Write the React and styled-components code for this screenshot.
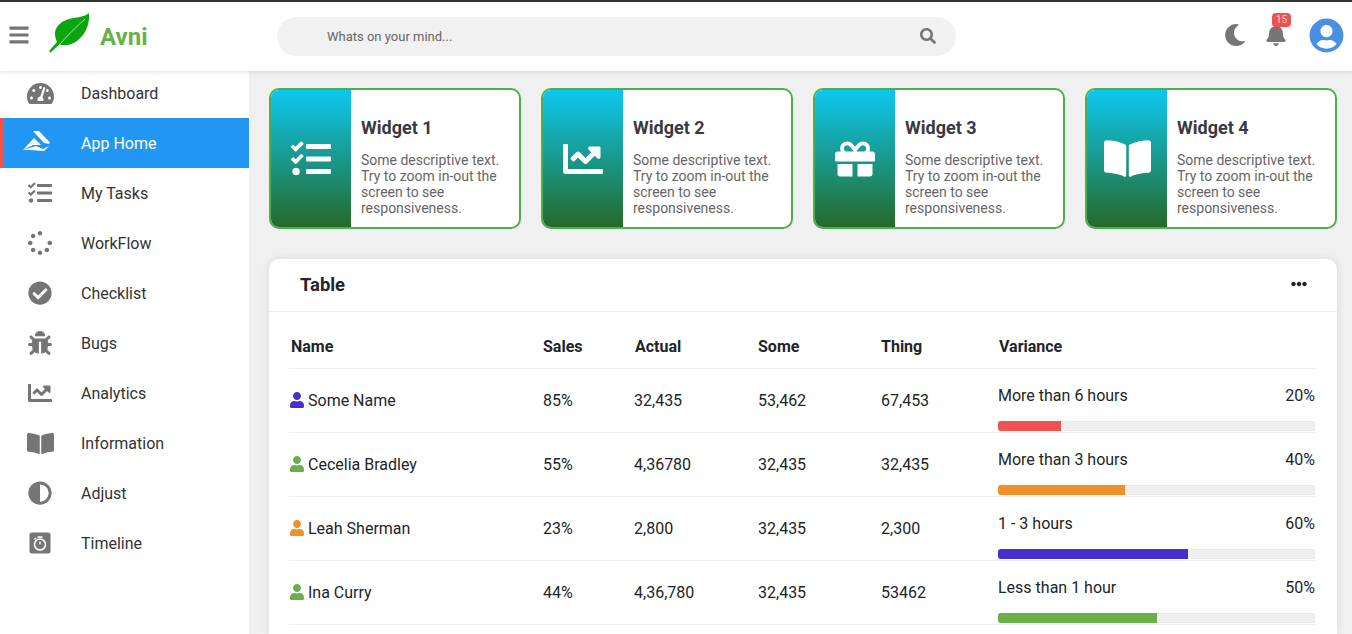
import React from 'react';
import styled, { createGlobalStyle } from 'styled-components';
import {
  FaAdjust,
  FaBars,
  FaBell,
  FaBookOpen,
  FaBug,
  FaChartLine,
  FaCheckCircle,
  FaEllipsisH,
  FaGift,
  FaMoon,
  FaSearch,
  FaSpinner,
  FaTachometerAlt,
  FaTasks,
  FaUser,
  FaUserCircle,
} from 'react-icons/fa';

const GlobalStyle = createGlobalStyle`
  html, body {
    margin: 0;
    height: 100%;
    overflow: hidden;
    background: #f0f0f0;
    font-family: Roboto, 'Liberation Sans', sans-serif;
    color: #212529;
  }
  * { box-sizing: border-box; }
`;

const Page = styled.div`
  display: flex;
  flex-direction: column;
  height: 100vh;
`;

const Header = styled.header`
  position: relative;
  z-index: 2;
  flex: none;
  display: flex;
  align-items: center;
  height: 71px;
  padding: 0 8px;
  background: #fff;
  border-top: 2px solid #333;
  box-shadow: 0 1px 4px rgba(0, 0, 0, 0.12);
`;

const MenuButton = styled.div`
  display: flex;
  width: 22px;
  margin-top: -3px;
  margin-right: 14px;
  color: #757575;
  font-size: 22px;
`;

const Logo = styled.div`
  display: flex;
  align-items: center;
  width: 233px;
  color: #69b04b;
  font-size: 24px;
  font-weight: 700;
`;

const LeafSvg = styled.svg`
  flex: none;
  margin-bottom: 7px;
`;

const LogoName = styled.span`
  margin-top: 1px;
  margin-left: 4px;
`;

const Search = styled.div`
  display: flex;
  align-items: center;
  justify-content: space-between;
  width: 679px;
  height: 39px;
  margin-top: -1px;
  padding: 0 20px 0 50px;
  border-radius: 20px;
  background: #f1f1f1;
  color: #666;
  font-size: 13px;
  svg {
    color: #757575;
    font-size: 16px;
  }
`;

const HeaderTools = styled.div`
  display: flex;
  align-items: center;
  margin-left: auto;
  margin-top: -3px;
  color: #757575;
`;

const MoonWrap = styled.span`
  display: flex;
  font-size: 22px;
`;

const BellWrap = styled.div`
  position: relative;
  display: flex;
  margin: 0 22px 0 19px;
  font-size: 22px;
`;

const Badge = styled.span`
  position: absolute;
  top: -11px;
  left: 7px;
  width: 19px;
  height: 14px;
  border-radius: 4px;
  background: #ef5350;
  color: #fbd5d5;
  font-size: 10px;
  line-height: 14px;
  text-align: center;
`;

const Avatar = styled.div`
  display: flex;
  margin-top: 1px;
  color: #4a90e2;
  font-size: 35px;
`;

const Body = styled.div`
  flex: 1;
  display: flex;
  min-height: 0;
`;

const Sidebar = styled.nav`
  flex: none;
  width: 249px;
  margin-top: -3px;
  background: #fff;
`;

const NavItem = styled.div`
  display: flex;
  align-items: center;
  height: 50px;
  border-left: ${(p) => (p.$active ? '4px solid #ef5350' : 'none')};
  padding-left: ${(p) => (p.$active ? '23px' : '27px')};
  background: ${(p) => (p.$active ? '#2196f3' : 'transparent')};
  color: ${(p) => (p.$active ? '#fff' : '#333')};
  font-size: 16px;
`;

const NavIcon = styled.span`
  display: flex;
  justify-content: center;
  width: 26px;
  margin-right: 28px;
  color: ${(p) => (p.$active ? '#fff' : '#757575')};
  font-size: 24px;
  svg {
    flex: none;
  }
`;

const Main = styled.main`
  flex: 1;
  display: flex;
  flex-direction: column;
  min-width: 0;
  padding: 17px 15px 0 20px;
`;

const Widgets = styled.section`
  display: grid;
  grid-template-columns: repeat(4, 252px);
  gap: 20px;
`;

const Widget = styled.article`
  display: flex;
  height: 141px;
  overflow: hidden;
  border: 2px solid #4caf50;
  border-radius: 10px;
  background: #fff;
`;

const WidgetIcon = styled.div`
  flex: none;
  display: flex;
  align-items: center;
  justify-content: center;
  width: 80px;
  background: linear-gradient(#0dc8f0, #26692a);
  color: #fff;
  font-size: 40px;
  svg {
    flex: none;
  }
`;

const WidgetBody = styled.div`
  padding: 27px 10px 0 10px;
`;

const WidgetTitle = styled.h3`
  margin: 0 0 14px;
  color: #393a42;
  font-size: 18px;
  font-weight: 700;
  line-height: 21px;
`;

const WidgetText = styled.p`
  margin: 0;
  color: #666;
  font-size: 14px;
  line-height: 16px;
`;

const Card = styled.section`
  flex: 1;
  margin-top: 30px;
  border-radius: 10px 10px 0 0;
  background: #fff;
  box-shadow: 0 0 8px rgba(0, 0, 0, 0.1);
`;

const CardHead = styled.div`
  display: flex;
  align-items: center;
  justify-content: space-between;
  height: 53px;
  padding: 0 30px 2px 31px;
  border-bottom: 1px solid #eee;
`;

const CardTitle = styled.h2`
  margin: 0;
  color: #212529;
  font-size: 18.4px;
  font-weight: 700;
`;

const More = styled.span`
  display: flex;
  color: #212529;
  font-size: 16px;
`;

const Table = styled.div`
  padding: 0 21px 0 20px;
`;

const Row = styled.div`
  display: grid;
  grid-template-columns: 254px 91px 124px 123px 117px 1fr;
  align-items: center;
  height: ${(p) => (p.$head ? '57px' : '64px')};
  border-bottom: 1px solid #eee;
  font-size: 16px;
`;

const HeadCell = styled.div`
  padding-top: 12px;
  padding-left: ${(p) => p.$inset || 0}px;
  color: #212529;
  font-weight: 700;
`;

const Cell = styled.div`
  margin-top: -1px;
  color: #212529;
`;

const NameCell = styled(Cell)`
  display: flex;
  align-items: center;
  gap: 3px;
`;

const PersonIcon = styled.span`
  display: flex;
  color: ${(p) => p.$color};
  font-size: 16px;
`;

const Variance = styled.div`
  align-self: stretch;
  display: flex;
  flex-direction: column;
  justify-content: flex-end;
  padding: 0 1px 1px 0;
`;

const VarianceLabel = styled.div`
  display: flex;
  justify-content: space-between;
  margin-bottom: 16px;
`;

const Bar = styled.div`
  height: 10px;
  overflow: hidden;
  border-radius: 3px;
  background: #f0f0f0;
  box-shadow: inset 0 0 0 1px #e9e9e9;
`;

const BarFill = styled.div`
  height: 100%;
  background: ${(p) => p.$color};
`;

const AppHomeIcon = () => (
  <svg width="34" height="26" viewBox="0 0 34 26" fill="#fff">
    <path d="M10 1L16 1 26.500 12 26.500 14 21 13Z" />
    <path d="M11 8L18 15 10 15 0 20Z" />
    <path d="M0 20L13 16 20 19 26 16 21 21 7 20Z" />
  </svg>
);

const TimelineIcon = () => (
  <svg width="22" height="22" viewBox="0 0 22 22">
    <rect x="0.5" y="0.5" width="21" height="21" rx="2.5" fill="#757575" />
    <circle cx="11" cy="12.500" r="5.500" fill="none" stroke="#fff" strokeWidth="1.6" />
    <path d="M8.500 5h5M5.500 7.500l1.500-1.500" stroke="#fff" strokeWidth="1.5" />
    <path d="M11 9.500V12.500" stroke="#fff" strokeWidth="1.4" />
  </svg>
);

const LeafIcon = () => (
  <LeafSvg width="52" height="50" viewBox="0 0 52 50">
    <path
      d="M45 5C40 10 30 9 22 12 15 15 11 20 11 26 11 29 12 32 13 34L5 43 6.500 44.500 15.500 36.500C20 38 28 37 33 33 41 27 46 17 45 5Z"
      fill="#0aa50f"
    />
    <path d="M15.500 36.500C24 27 32 19 41 11" stroke="#c4ecb8" strokeWidth="0.8" fill="none" />
  </LeafSvg>
);

const navItems = [
  { label: 'Dashboard', icon: <FaTachometerAlt size={27} /> },
  { label: 'App Home', icon: <AppHomeIcon />, active: true },
  { label: 'My Tasks', icon: <FaTasks /> },
  { label: 'WorkFlow', icon: <FaSpinner /> },
  { label: 'Checklist', icon: <FaCheckCircle /> },
  { label: 'Bugs', icon: <FaBug /> },
  { label: 'Analytics', icon: <FaChartLine /> },
  { label: 'Information', icon: <FaBookOpen size={27} /> },
  { label: 'Adjust', icon: <FaAdjust /> },
  { label: 'Timeline', icon: <TimelineIcon /> },
];

const widgets = [
  { title: 'Widget 1', icon: <FaTasks /> },
  { title: 'Widget 2', icon: <FaChartLine /> },
  { title: 'Widget 3', icon: <FaGift /> },
  { title: 'Widget 4', icon: <FaBookOpen size={47} /> },
];

const rows = [
  { name: 'Some Name', color: '#4a2fcf', sales: '85%', actual: '32,435', some: '53,462', thing: '67,453', label: 'More than 6 hours', pct: 20, bar: '#ef5350' },
  { name: 'Cecelia Bradley', color: '#69b04b', sales: '55%', actual: '4,36780', some: '32,435', thing: '32,435', label: 'More than 3 hours', pct: 40, bar: '#f0902a' },
  { name: 'Leah Sherman', color: '#f0902a', sales: '23%', actual: '2,800', some: '32,435', thing: '2,300', label: '1 - 3 hours', pct: 60, bar: '#4a2fcf' },
  { name: 'Ina Curry', color: '#69b04b', sales: '44%', actual: '4,36,780', some: '32,435', thing: '53462', label: 'Less than 1 hour', pct: 50, bar: '#69b04b' },
];

export default function App() {
  return (
    <Page>
      <GlobalStyle />
      <Header>
        <MenuButton>
          <FaBars />
        </MenuButton>
        <Logo>
          <LeafIcon />
          <LogoName>Avni</LogoName>
        </Logo>
        <Search>
          <span>Whats on your mind...</span>
          <FaSearch />
        </Search>
        <HeaderTools>
          <MoonWrap>
            <FaMoon />
          </MoonWrap>
          <BellWrap>
            <FaBell />
            <Badge>15</Badge>
          </BellWrap>
          <Avatar>
            <FaUserCircle />
          </Avatar>
        </HeaderTools>
      </Header>
      <Body>
        <Sidebar>
          {navItems.map((item) => (
            <NavItem key={item.label} $active={item.active}>
              <NavIcon $active={item.active}>{item.icon}</NavIcon>
              {item.label}
            </NavItem>
          ))}
        </Sidebar>
        <Main>
          <Widgets>
            {widgets.map((w) => (
              <Widget key={w.title}>
                <WidgetIcon>{w.icon}</WidgetIcon>
                <WidgetBody>
                  <WidgetTitle>{w.title}</WidgetTitle>
                  <WidgetText>
                    Some descriptive text. Try to zoom in-out the screen to see responsiveness.
                  </WidgetText>
                </WidgetBody>
              </Widget>
            ))}
          </Widgets>
          <Card>
            <CardHead>
              <CardTitle>Table</CardTitle>
              <More>
                <FaEllipsisH />
              </More>
            </CardHead>
            <Table>
              <Row $head>
                <HeadCell $inset={2}>Name</HeadCell>
                <HeadCell>Sales</HeadCell>
                <HeadCell $inset={1}>Actual</HeadCell>
                <HeadCell>Some</HeadCell>
                <HeadCell>Thing</HeadCell>
                <HeadCell $inset={1}>Variance</HeadCell>
              </Row>
              {rows.map((r) => (
                <Row key={r.name}>
                  <NameCell>
                    <PersonIcon $color={r.color}>
                      <FaUser />
                    </PersonIcon>
                    {r.name}
                  </NameCell>
                  <Cell>{r.sales}</Cell>
                  <Cell>{r.actual}</Cell>
                  <Cell>{r.some}</Cell>
                  <Cell>{r.thing}</Cell>
                  <Variance>
                    <VarianceLabel>
                      <span>{r.label}</span>
                      <span>{r.pct}%</span>
                    </VarianceLabel>
                    <Bar>
                      <BarFill $color={r.bar} style={{ width: `${r.pct}%` }} />
                    </Bar>
                  </Variance>
                </Row>
              ))}
            </Table>
          </Card>
        </Main>
      </Body>
    </Page>
  );
}
